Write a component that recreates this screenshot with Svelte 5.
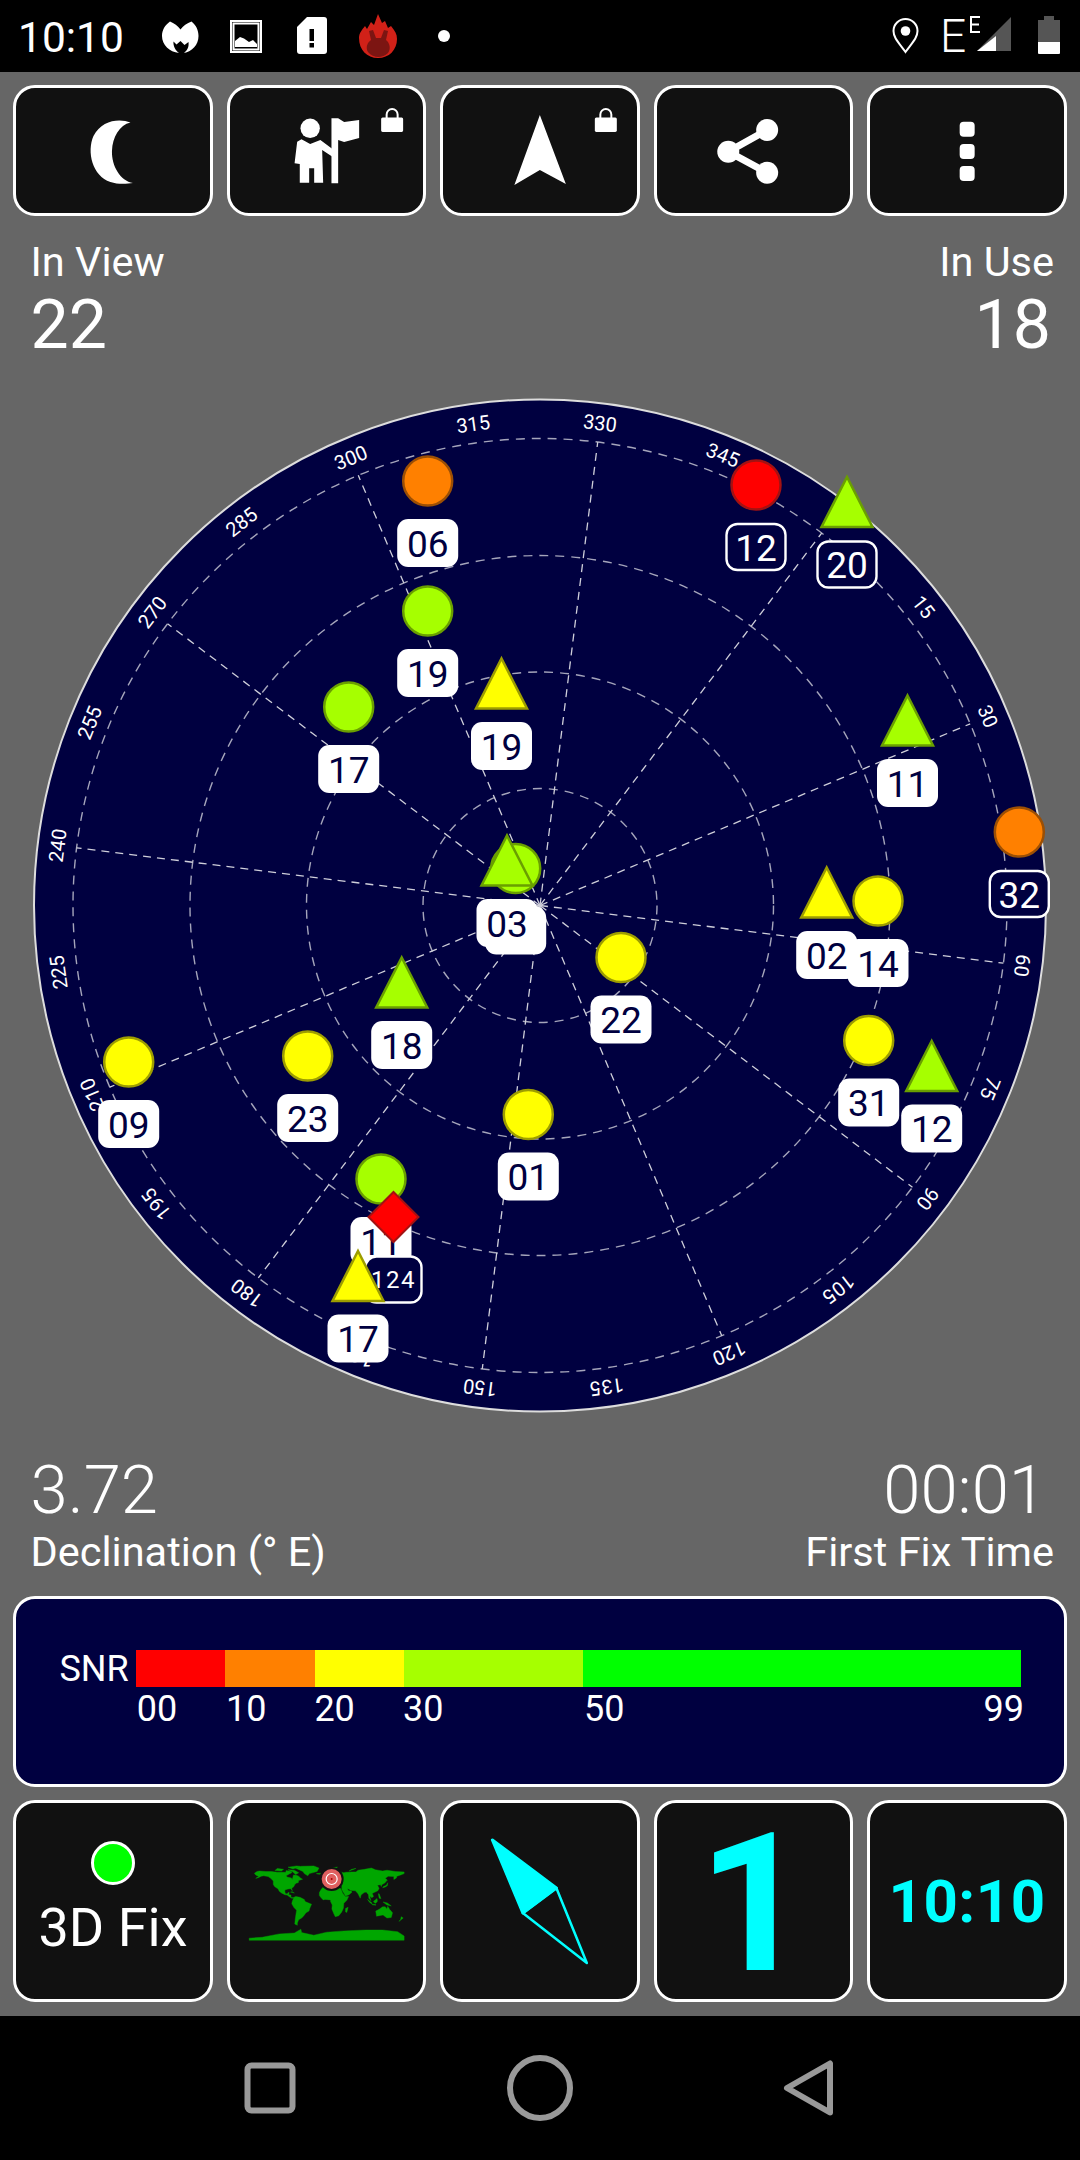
<script>
  const CX = 540, CY = 905.5, ROT = 37.1;
  const rad = (d) => (d * Math.PI) / 180;
  const polar = (r, a) => [CX + r * Math.sin(rad(a)), CY - r * Math.cos(rad(a))];

  const rings = [117, 233.5, 350, 467];
  const spokes = Array.from({ length: 12 }, (_, i) => polar(467, i * 30 + ROT));
  const ticks = Array.from({ length: 24 }, (_, i) => {
    const deg = i * 15;
    const a = deg + ROT;
    const [x, y] = polar(486, a);
    return { text: String(deg), x, y, a };
  });

  const COLORS = {
    red: ['#ff0000', '#a31212'],
    orange: ['#ff8000', '#9c4f04'],
    yellow: ['#ffff00', '#9d9d00'],
    lime: ['#a6ff00', '#6a9f00']
  };

  // kind: c circle, t triangle, d diamond. hollow = satellite not in use.
  const sats = [
    { k: 'c', c: 'orange', x: 427.7, y: 481, n: '06' },
    { k: 'c', c: 'lime', x: 427.7, y: 611, n: '19' },
    { k: 'c', c: 'lime', x: 348.7, y: 707, n: '17' },
    { k: 't', c: 'yellow', x: 501.5, y: 657, n: '19' },
    { k: 'c', c: 'red', x: 756, y: 485, n: '12', hollow: true },
    { k: 't', c: 'lime', x: 847, y: 475.5, n: '20', hollow: true },
    { k: 't', c: 'lime', x: 907.5, y: 694, n: '11' },
    { k: 'c', c: 'orange', x: 1019.3, y: 832, n: '32', hollow: true },
    { k: 'c', c: 'yellow', x: 878, y: 901, n: '14' },
    { k: 't', c: 'yellow', x: 826.7, y: 866, n: '02' },
    { k: 'c', c: 'lime', x: 515.7, y: 868.5, n: '03' },
    { k: 't', c: 'lime', x: 507, y: 834, n: '03' },
    { k: 'c', c: 'yellow', x: 621, y: 957.5, n: '22' },
    { k: 'c', c: 'yellow', x: 868.7, y: 1040.5, n: '31' },
    { k: 't', c: 'lime', x: 931.7, y: 1039.5, n: '12' },
    { k: 'c', c: 'yellow', x: 528.3, y: 1114.5, n: '01' },
    { k: 't', c: 'lime', x: 401.7, y: 956, n: '18' },
    { k: 'c', c: 'yellow', x: 128.7, y: 1062, n: '09' },
    { k: 'c', c: 'yellow', x: 307.7, y: 1056, n: '23' },
    { k: 'c', c: 'lime', x: 381, y: 1179, n: '11' },
    { k: 'd', c: 'red', x: 393.5, y: 1217, n: '124', hollow: true },
    { k: 't', c: 'yellow', x: 358, y: 1249.5, n: '17' }
  ].map((s) => ({
    ...s,
    labelY: s.k === 'c' ? s.y + 62 : s.k === 't' ? s.y + 89 : s.y + 62.5
  }));

  const triangle = (x, y) => `${x},${y + 1.5} ${x + 25.5},${y + 51.5} ${x - 25.5},${y + 51.5}`;
  const diamond = (x, y) => `${x},${y - 25} ${x + 25},${y} ${x},${y + 25} ${x - 25},${y}`;

  const snr = [
    { color: '#ff0000', w: 89.3 },
    { color: '#ff8000', w: 89.7 },
    { color: '#ffff00', w: 89.3 },
    { color: '#a6ff00', w: 178.6 },
    { color: '#00ff00', w: 438 }
  ];
  const snrLabels = [
    { t: '00', w: 89.3 },
    { t: '10', w: 88.4 },
    { t: '20', w: 88.6 },
    { t: '30', w: 181 },
    { t: '50', w: 397 }
  ];

  const K = 155 / 360;
  const land = [
    [[-168,66],[-162,70],[-156,71],[-141,70],[-128,70],[-115,68],[-95,68],[-94,72],[-82,70],[-81,67],[-87,64],[-94,60],[-92,57],[-82,55],[-80,51],[-79,55],[-77,62],[-70,61],[-65,59],[-60,54],[-56,52],[-65,49],[-66,44],[-70,43],[-74,40],[-76,35],[-81,31],[-80,25],[-82,28],[-84,30],[-90,29],[-97,27],[-97,22],[-95,18],[-91,18],[-90,21],[-87,21],[-88,16],[-83,15],[-83,10],[-78,9],[-80,7],[-85,10],[-92,15],[-97,16],[-105,20],[-110,24],[-113,30],[-117,32],[-121,35],[-124,40],[-124,48],[-130,54],[-136,58],[-146,60],[-152,59],[-160,55],[-165,54],[-158,58],[-165,62]],
    [[-73,78],[-60,82],[-30,83],[-18,78],[-22,70],[-40,65],[-44,60],[-52,65],[-55,70],[-68,76]],
    [[-120,72],[-105,71],[-100,75],[-115,77]],
    [[-90,74],[-75,73],[-65,67],[-72,63],[-80,70]],
    [[-90,80],[-70,83],[-62,82],[-78,76]],
    [[-78,9],[-72,12],[-62,10],[-52,5],[-50,0],[-35,-6],[-39,-15],[-41,-22],[-48,-26],[-54,-34],[-58,-38],[-65,-42],[-68,-50],[-68,-55],[-74,-52],[-73,-40],[-70,-20],[-76,-14],[-81,-5],[-80,1],[-77,7]],
    [[-6,36],[10,37],[11,33],[20,31],[32,31],[35,25],[37,20],[43,12],[51,12],[47,3],[40,-4],[39,-15],[35,-24],[28,-33],[20,-35],[17,-29],[12,-17],[13,-8],[9,0],[9,4],[-4,5],[-8,4],[-13,9],[-17,14],[-17,21],[-13,28]],
    [[-9,37],[-9,43],[-2,44],[-4,48],[3,51],[8,54],[8,57],[12,54],[20,55],[24,59],[30,60],[22,60],[22,65],[17,61],[16,56],[11,59],[5,59],[12,66],[25,71],[40,67],[44,68],[60,69],[68,69],[73,73],[88,75],[104,78],[113,74],[130,71],[140,73],[160,70],[180,69],[180,65],[172,62],[163,59],[162,55],[156,51],[156,58],[143,59],[136,54],[141,50],[135,43],[128,39],[127,35],[125,39],[118,38],[122,31],[119,25],[110,21],[106,19],[109,12],[105,9],[100,13],[103,2],[98,8],[97,16],[92,22],[87,21],[80,15],[78,8],[73,18],[67,25],[57,26],[51,29],[48,30],[51,25],[56,25],[59,22],[52,16],[44,13],[39,21],[35,28],[35,36],[28,36],[26,40],[23,37],[20,41],[14,45],[18,40],[16,38],[10,44],[3,42],[0,39],[-5,36]],
    [[-5,50],[1,51],[-2,58],[-6,57]],
    [[-24,65],[-14,66],[-15,63.5],[-22,64]],
    [[130,32],[136,34],[141,37],[142,44],[139,38],[132,35]],
    [[44,-16],[50,-13],[47,-25],[44,-24]],
    [[114,-22],[122,-18],[130,-12],[136,-12],[140,-17],[142,-11],[146,-18],[153,-26],[150,-37],[140,-38],[131,-31],[116,-34]],
    [[173,-35],[178,-38],[168,-46],[172,-41]],
    [[109,1],[117,7],[118,1],[114,-4],[110,-2]],
    [[95,5],[104,-2],[106,-6],[100,-2]],
    [[131,-1],[141,-3],[150,-10],[140,-8]],
    [[120,18],[122,18],[126,7],[122,8]],
    [[-84,22],[-75,20],[-80,23]],
    [[106,-6],[114,-7],[114,-8.5],[106,-7.5]],
    [[14,79],[25,80],[20,76]],
    [[52,71],[68,77],[58,75]],
    [[-180,-90],[-180,-85],[-150,-83],[-110,-75],[-75,-73],[-60,-64],[-58,-72],[-30,-78],[0,-71],[40,-68],[90,-66],[130,-66],[165,-70],[180,-80],[180,-90]]
  ].map((poly) =>
    poly.map(([lon, lat]) => `${(249 + (lon + 180) * K).toFixed(1)},${(1865 + (85 - lat) * K).toFixed(1)}`).join(' ')
  );

  const shackle = (x) => `M${x + 5.5} 118 v-3.5 a5.5 5.5 0 0 1 11 0 v3.5`;
  const lockBody = (x) =>
    `M${x} 119 a1.5 1.5 0 0 1 1.5 -1.5 h19 a1.5 1.5 0 0 1 1.5 1.5 v11.5 a1.5 1.5 0 0 1 -1.5 1.5 h-19 a1.5 1.5 0 0 1 -1.5 -1.5 z`;
</script>

<div class="screen">
  <header class="status">
    <span class="clock">10:10</span>
    <svg class="s-icon malware" viewBox="160 18 38 38">
      <path class="w" d="M169 21.5 C173 23 177 26 179.5 29.5 C182 26 186 23 190.5 21.5 C195 25 197.5 30 197.5 36 C197.5 45 191 51.5 183 53 C186.5 50 188 47 187.5 42 L183.5 45 L179.5 41 L175.5 44.5 L172.5 41.5 C172 46 174.5 50.5 178 53 C168.5 52 161 45 161 36 C161 30 164 25 169 21.5 Z" />
    </svg>
    <svg class="s-icon gallery" viewBox="229 20 32 33">
      <rect class="o" x="230" y="21" width="30" height="31" />
      <rect class="o" x="232.5" y="23.5" width="25" height="26" stroke-width="1" />
      <path class="w" d="M234 47 V41 L239 37 L243 38.5 L248 42 L252 40 L256 44 V47 Z" />
    </svg>
    <svg class="s-icon sim" viewBox="296 17 30 38">
      <path class="w" d="M306 17 H323 a3 3 0 0 1 3 3 V51 a3 3 0 0 1 -3 3 H299 a3 3 0 0 1 -3 -3 V27 Z" />
      <rect x="308.5" y="29" width="4.5" height="12" fill="#000" />
      <rect x="308.5" y="43" width="4.5" height="4.5" fill="#000" />
    </svg>
    <svg class="s-icon antutu" viewBox="358 14 39 45">
      <path fill="#d12118" d="M358 38 C358 33 361 30 364 26 L366 29 L370 22 L373 25 L377 14 L381 23 L384 21 L387 28 L390 26 C394 31 396 34 396 39 C396 50 388 58 377 58 C366 58 358 50 358 38 Z" />
      <path fill="#7c1512" d="M367 52 C364 47 367 42 370 40 L368 31 L372 30 L375 38 H380 L383 30 L387 31 L385 40 C389 43 390 49 387 53 C381 59 372 58 367 52 Z" />
    </svg>
    <span class="notif-dot"></span>
    <span class="spacer"></span>
    <svg class="s-icon pin" viewBox="892 18 27 37">
      <path class="o" stroke-width="2.6" d="M905.5 52 C899 43 893.5 38 893.5 31 A12 12 0 0 1 917.5 31 C917.5 38 912 43 905.5 52 Z" />
      <circle class="w" cx="905.5" cy="31" r="4.8" />
    </svg>
    <span class="net">E</span>
    <svg class="s-icon signal" viewBox="968 15 44 38">
      <path fill="#555" d="M1011 17 V51 H977 Z" />
      <path class="w" d="M996 36 V51 H977 Z" />
      <path class="o" stroke-width="2" d="M980 17 H971 V32 H980 M971 24.5 H979" />
    </svg>
    <svg class="s-icon battery" viewBox="1038 16 22 39">
      <path fill="#555" d="M1044 16 H1054 V20 H1060 V54 H1038 V20 H1044 Z" />
      <path class="w" d="M1038 42 H1060 V52.5 a1.5 1.5 0 0 1 -1.5 1.5 H1039.5 a1.5 1.5 0 0 1 -1.5 -1.5 Z" />
    </svg>
  </header>

  <main class="content">
    <section class="row-top">
      <div class="btn">
        <svg viewBox="16.5 88 194 125">
          <path class="w" d="M131 122.5 C120 118 102 120 94 136 C87 152 93 176 111 182 C118 184.5 127 184 133.5 183 C121 181 112 166 112.5 151 C113 137 120 125 131 122.5 Z" />
        </svg>
      </div>
      <div class="btn">
        <svg viewBox="229.8 88 194 125">
          <circle class="w" cx="310" cy="128.3" r="9.7" />
          <path class="w" d="M294.4 163.3 L297 141.7 L301.3 139.3 L310 144 L320.2 140 L332.3 149 V156.7 L322 150 L323 182.7 H314 V168.3 H309 V182.7 H299.6 V164 Z" />
          <path class="w" d="M331.3 118.3 H338 L344 122 L359 120 V138 L344 142 L338 140 V183.3 H331.3 Z" />
          <path class="o" d={shackle(381)} />
          <path class="w" d={lockBody(381)} />
        </svg>
      </div>
      <div class="btn">
        <svg viewBox="443.1 88 194 125">
          <path class="w" d="M540 115 L566 184 L540 170 L514.5 185 Z" />
          <path class="o" d={shackle(595)} />
          <path class="w" d={lockBody(595)} />
        </svg>
      </div>
      <div class="btn">
        <svg viewBox="656.4 88 194 125">
          <path class="o share-line" d="M766.6 130 L727.7 151.7 L766.6 172.7" />
          <circle class="w" cx="766.6" cy="130" r="11" />
          <circle class="w" cx="727.7" cy="151.7" r="11" />
          <circle class="w" cx="766.6" cy="172.7" r="11" />
        </svg>
      </div>
      <div class="btn">
        <svg viewBox="869.7 88 194 125">
          <rect class="w" x="959.4" y="121.7" width="15" height="15" rx="4" />
          <rect class="w" x="959.4" y="144" width="15" height="15" rx="4" />
          <rect class="w" x="959.4" y="166" width="15" height="15" rx="4" />
        </svg>
      </div>
    </section>

    <section class="stats stats-top">
      <div>
        <div class="caption">In View</div>
        <div class="value">22</div>
      </div>
      <div class="right">
        <div class="caption">In Use</div>
        <div class="value">18</div>
      </div>
    </section>

    <svg class="sky" viewBox="33 399 1014 1014">
      <circle class="disc" cx={CX} cy={CY} r="506" />
      {#each rings as r}
        <circle class="ring" cx={CX} cy={CY} {r} />
      {/each}
      {#each spokes as [x, y]}
        <line class="spoke" x1={CX} y1={CY} x2={x} y2={y} />
      {/each}
      {#each ticks as t}
        <text class="tick" x={t.x} y={t.y + 7} transform={`rotate(${t.a} ${t.x} ${t.y})`}>{t.text}</text>
      {/each}
      {#each sats as s}
        <g>
          {#if s.k === 'c'}
            <circle cx={s.x} cy={s.y} r="24.5" fill={COLORS[s.c][0]} stroke={COLORS[s.c][1]} stroke-width="2.5" />
          {:else if s.k === 't'}
            <polygon points={triangle(s.x, s.y)} fill={COLORS[s.c][0]} stroke={COLORS[s.c][1]} stroke-width="2.5" />
          {:else}
            <polygon points={diamond(s.x, s.y)} fill={COLORS[s.c][0]} stroke={COLORS[s.c][1]} stroke-width="2" />
          {/if}
          {#if s.hollow}
            <rect class="tag-hollow" x={s.x - (s.n.length > 2 ? 28 : 29.5)} y={s.labelY - 23} width={s.n.length > 2 ? 56 : 59} height="46" rx="11" />
          {:else}
            <rect class="tag" x={s.x - 30.5} y={s.labelY - 24} width="61" height="48" rx="11" />
          {/if}
          <text class={s.n.length > 2 ? 'num small' : s.hollow ? 'num on-dark' : 'num'} x={s.x} y={s.labelY + (s.n.length > 2 ? 8.5 : 13.5)}>{s.n}</text>
        </g>
      {/each}
    </svg>

    <section class="stats stats-bottom">
      <div>
        <div class="value">3.72</div>
        <div class="caption">Declination (° E)</div>
      </div>
      <div class="right">
        <div class="value">00:01</div>
        <div class="caption">First Fix Time</div>
      </div>
    </section>

    <section class="snr">
      <div class="snr-row">
        <span class="snr-name">SNR</span>
        <div class="snr-bar">
          {#each snr as seg}
            <span class="seg" style={`width:${seg.w}px;background:${seg.color}`}></span>
          {/each}
        </div>
      </div>
      <div class="snr-scale">
        {#each snrLabels as l}
          <span style={`width:${l.w}px`}>{l.t}</span>
        {/each}
        <span class="last">99</span>
      </div>
    </section>

    <section class="row-bottom">
      <div class="btn fix">
        <span class="led"></span>
        <span class="fix-text">3D Fix</span>
      </div>
      <div class="btn">
        <svg viewBox="229.8 1803 194 196">
          {#each land as pts}
            <polygon points={pts} fill="#00a600" stroke="#00a600" stroke-width="0.4" />
          {/each}
          <circle cx="331.5" cy="1879" r="12" fill="#111" />
          <circle cx="331.5" cy="1879" r="10" fill="#df5f5f" />
          <circle cx="331.5" cy="1879" r="5.5" fill="none" stroke="#fff" stroke-width="1.2" />
          <circle cx="331.5" cy="1879" r="1" fill="#a00" />
        </svg>
      </div>
      <div class="btn">
        <svg viewBox="443.1 1803 194 196">
          <path class="needle-fill" d="M492.5 1840 L523 1913 L556.5 1888 Z" />
          <path class="needle-line" d="M523 1913 L556.5 1888 L587 1963 Z" />
        </svg>
      </div>
      <div class="btn big">1</div>
      <div class="btn clock2">10:10</div>
    </section>
  </main>

  <nav class="navbar">
    <svg viewBox="0 2016 1080 144">
      <rect class="nav" x="247.5" y="2065.5" width="45" height="45" rx="4" />
      <circle class="nav" cx="540" cy="2088" r="30" />
      <path class="nav" d="M787 2088 L830 2063.5 V2112.5 Z" />
    </svg>
  </nav>
</div>

<style>
  :global(body) {
    margin: 0;
    background: #000;
  }
  .screen {
    width: 1080px;
    height: 2160px;
    display: flex;
    flex-direction: column;
    font-family: Roboto, "Liberation Sans", sans-serif;
    color: #fff;
    overflow: hidden;
  }
  .w { fill: #fff; }
  .o { fill: none; stroke: #fff; stroke-width: 2; }
  .share-line { stroke-width: 7; }

  .status {
    height: 72px;
    flex: none;
    background: #000;
    display: flex;
    align-items: flex-start;
  }
  .clock {
    font-size: 42.5px;
    line-height: 47px;
    margin: 14px 0 0 18px;
    width: 143px;
  }
  .s-icon { display: block; flex: none; }
  .malware { width: 38px; height: 38px; margin-top: 18px; }
  .gallery { width: 32px; height: 33px; margin: 20px 0 0 31px; }
  .sim { width: 30px; height: 38px; margin: 17px 0 0 35px; }
  .antutu { width: 39px; height: 45px; margin: 14px 0 0 32px; }
  .notif-dot {
    width: 12px;
    height: 12px;
    border-radius: 50%;
    background: #fff;
    margin: 30px 0 0 40px;
  }
  .spacer { flex: 1; }
  .pin { width: 27px; height: 37px; margin-top: 18px; }
  .net {
    font-size: 46px;
    line-height: 54px;
    font-weight: 300;
    margin: 9px 0 0 21px;
    width: 28px;
  }
  .signal { width: 44px; height: 38px; margin-top: 15px; }
  .battery { width: 22px; height: 39px; margin: 16px 20px 0 26px; }

  .content {
    flex: none;
    height: 1944px;
    background: #666;
    padding: 13px 13px 14px;
    box-sizing: border-box;
    display: flex;
    flex-direction: column;
  }
  .row-top, .row-bottom {
    display: grid;
    grid-template-columns: repeat(5, 1fr);
    column-gap: 13.6px;
    flex: none;
  }
  .row-top { height: 131px; }
  .row-bottom { height: 202px; margin-top: 13px; }
  .btn {
    background: #111;
    border: 3px solid #fff;
    border-radius: 22px;
    box-sizing: border-box;
    overflow: hidden;
    min-width: 0;
  }
  .btn svg { display: block; width: 100%; height: 100%; }

  .stats {
    display: flex;
    justify-content: space-between;
    padding: 0 13px 0 17.5px;
    flex: none;
    height: 183px;
    box-sizing: border-box;
  }
  .stats-top { padding-top: 22px; }
  .stats-bottom { padding-top: 42px; }
  .right { text-align: right; }
  .caption {
    font-size: 41.5px;
    line-height: 47px;
  }
  .value {
    font-size: 66px;
    line-height: 70px;
  }
  .stats-top .value { font-size: 68px; margin-top: 5px; }
  .stats-top .right .value { margin-right: 3px; }
  .stats-bottom .right .value { margin-right: 8px; }
  .stats-bottom .value { font-weight: 300; font-size: 67px; }
  .stats-bottom .caption { margin-top: 3px; }

  .sky {
    display: block;
    width: 1014px;
    height: 1014px;
    flex: none;
    align-self: center;
    overflow: visible;
  }
  .disc { fill: #000040; stroke: #ddd; stroke-width: 2; }
  .ring {
    fill: none;
    stroke: #a5a5bb;
    stroke-width: 1.4;
    stroke-dasharray: 9 7;
  }
  .spoke {
    stroke: #cfcfda;
    stroke-width: 1.3;
    stroke-dasharray: 8 6;
  }
  .tick {
    font-size: 20px;
    fill: #fff;
    text-anchor: middle;
  }
  .tag { fill: #fff; }
  .tag-hollow { fill: #000040; stroke: #fff; stroke-width: 2.4; }
  .num {
    font-size: 37px;
    fill: #000040;
    text-anchor: middle;
  }
  .num.on-dark { fill: #fff; }
  .num.small { font-size: 24px; fill: #fff; letter-spacing: 1.5px; }

  .snr {
    height: 191px;
    flex: none;
    box-sizing: border-box;
    background: #000040;
    border: 3px solid #fff;
    border-radius: 22px;
    padding-top: 51px;
  }
  .snr-row { display: flex; align-items: center; height: 37px; }
  .snr-name {
    width: 119.7px;
    text-align: right;
    padding-right: 7px;
    box-sizing: border-box;
    font-size: 36px;
  }
  .snr-bar { display: flex; height: 37px; }
  .seg { display: block; height: 100%; }
  .snr-scale {
    display: flex;
    padding-left: 120.7px;
    font-size: 36px;
    line-height: 41px;
    margin-top: 2px;
  }
  .snr-scale span { display: block; flex: none; box-sizing: border-box; }
  .snr-scale .last { margin-left: auto; margin-right: 40px; }

  .fix {
    display: flex;
    flex-direction: column;
    align-items: center;
  }
  .led {
    width: 44px;
    height: 44px;
    box-sizing: border-box;
    border: 3px solid #fff;
    border-radius: 50%;
    background: #00ff00;
    margin-top: 38px;
  }
  .fix-text {
    font-size: 54px;
    line-height: 61px;
    margin-top: 12px;
  }
  .needle-fill {
    fill: #00ffff;
    stroke: #00ffff;
    stroke-width: 3;
    stroke-linejoin: round;
  }
  .needle-line {
    fill: none;
    stroke: #00ffff;
    stroke-width: 2.5;
    stroke-linejoin: round;
  }
  .big, .clock2 {
    color: #00ffff;
    font-weight: 700;
    display: flex;
    align-items: center;
    justify-content: center;
  }
  .big { font-size: 193px; line-height: 196px; padding-top: 6px; }
  .clock2 { font-size: 60px; letter-spacing: 0.5px; }

  .navbar { flex: 1; background: #000; }
  .navbar svg { display: block; width: 1080px; height: 144px; }
  .nav {
    fill: none;
    stroke: #999;
    stroke-width: 6;
    stroke-linejoin: round;
  }
</style>
